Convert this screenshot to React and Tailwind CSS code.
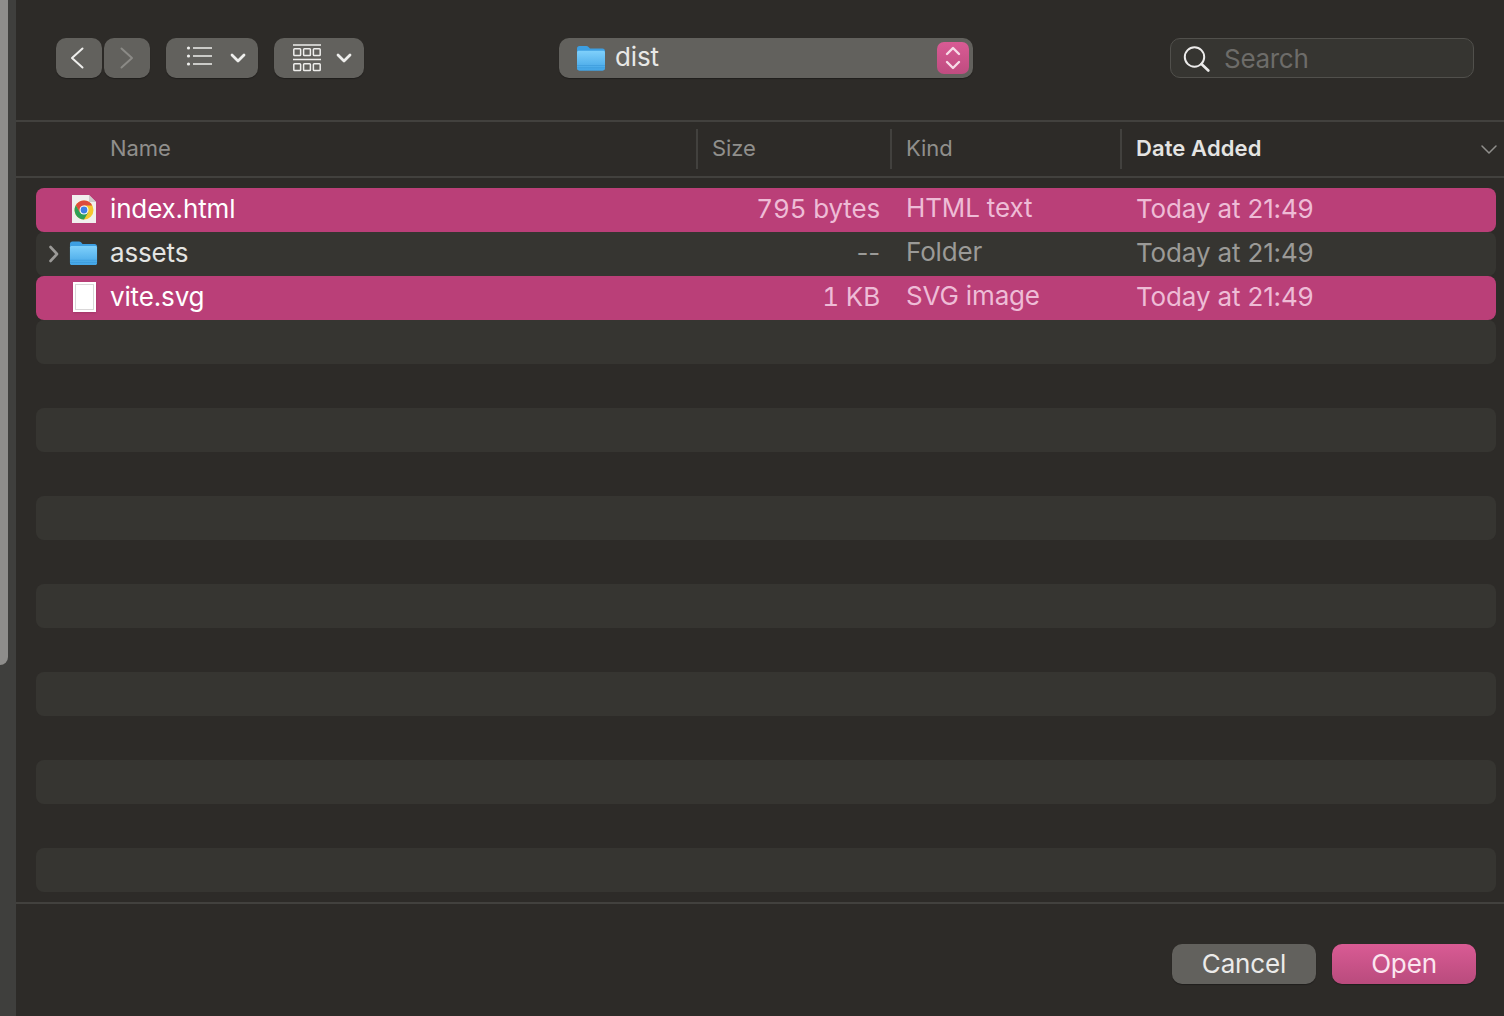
const FONT = 'font-["Inter","Liberation_Sans",sans-serif]';

const FILES = [
  { name: 'index.html', size: '795 bytes', kind: 'HTML text', date: 'Today at 21:49', icon: 'chrome', selected: true },
  { name: 'assets', size: '--', kind: 'Folder', date: 'Today at 21:49', icon: 'folder', expandable: true },
  { name: 'vite.svg', size: '1 KB', kind: 'SVG image', date: 'Today at 21:49', icon: 'blank', selected: true },
];

const EMPTY_ROWS = 13;

// thin open chevron, points given in its own box
function Chevron({ w, h, points, color, width = 2 }) {
  return (
    <svg viewBox={`0 0 ${w} ${h}`} width={w} height={h} fill="none" stroke={color} strokeWidth={width} strokeLinecap="round" strokeLinejoin="round" className="shrink-0">
      <polyline points={points} />
    </svg>
  );
}

function FolderIcon({ id, className }) {
  return (
    <svg viewBox="0 0 30 26" className={className}>
      <defs>
        <linearGradient id={id} x1="0" y1="0" x2="0" y2="1">
          <stop offset="0" stopColor="#7fd0fb" />
          <stop offset="1" stopColor="#43a5e6" />
        </linearGradient>
      </defs>
      <path d="M1 3.5C1 2 2 1 3.5 1h6.8c1 0 1.6.4 2.2 1l1.5 1.6H26.5C28 3.6 29 4.6 29 6v17c0 1.4-1 2.4-2.5 2.4h-23C2 25.4 1 24.4 1 23z" fill="#3d9fe2" />
      <path d="M1 7.4C1 6.4 1.8 5.8 2.8 5.8h24.4c1 0 1.8.6 1.8 1.6V23c0 1.4-1 2.4-2.5 2.4h-23C2 25.4 1 24.4 1 23z" fill={`url(#${id})`} />
      <path d="M1 20.5h28M1 22.8h28" stroke="#2f8ed2" strokeWidth="0.6" opacity="0.7" />
    </svg>
  );
}

function ChromeFileIcon() {
  return (
    <svg viewBox="0 0 26 28" className="w-[26px] h-[28px]">
      <path d="M1 0h17l7 7v21H1z" fill="#f1efee" />
      <path d="M18 0l7 7h-7z" fill="#cfcdcc" />
      <circle cx="13" cy="15" r="9.5" fill="#f6c62f" />
      <path d="M13 5.5a9.5 9.5 0 0 0-8.2 4.8l4.1 7.1L13 10.5h8.2A9.5 9.5 0 0 0 13 5.5z" fill="#dd4b3e" />
      <path d="M4.800 10.300A9.500 9.500 0 0 0 13 24.500l4.100-7.100h-8.200z" fill="#2f9e58" />
      <circle cx="13" cy="15" r="4.500" fill="#fff" />
      <circle cx="13" cy="15" r="3.400" fill="#3f7fe6" />
    </svg>
  );
}

function BlankFileIcon() {
  return (
    <div className="w-[23px] h-[30px] bg-white p-[2px] shadow-sm">
      <div className="w-full h-full border border-[#d9d7d8]" />
    </div>
  );
}

function ListIcon() {
  return (
    <svg viewBox="0 0 28 20" className="w-[28px] h-[20px] mb-[4px] shrink-0" stroke="#eeeeec" fill="none">
      <path d="M7 2h19M7 10h19M7 18h19" strokeWidth="1.700" />
      <circle cx="2.500" cy="2" r="1.600" fill="#eeeeec" stroke="none" />
      <circle cx="2.500" cy="10" r="1.600" fill="#eeeeec" stroke="none" />
      <circle cx="2.500" cy="18" r="1.600" fill="#eeeeec" stroke="none" />
    </svg>
  );
}

function GalleryIcon() {
  return (
    <svg viewBox="0 0 28 28" className="w-[28px] h-[28px] shrink-0" stroke="#eeeeec" fill="none" strokeWidth="1.500">
      <path d="M0 1h28M0 15.500h28" />
      <rect x="0.800" y="4.800" width="6.800" height="6.800" rx="0.800" />
      <rect x="10.600" y="4.800" width="6.800" height="6.800" rx="0.800" />
      <rect x="20.400" y="4.800" width="6.800" height="6.800" rx="0.800" />
      <rect x="0.800" y="19.800" width="6.800" height="6.800" rx="0.800" />
      <rect x="10.600" y="19.800" width="6.800" height="6.800" rx="0.800" />
      <rect x="20.400" y="19.800" width="6.800" height="6.800" rx="0.800" />
    </svg>
  );
}

function SearchIcon() {
  return (
    <svg viewBox="0 0 28 28" className="w-[28px] h-[28px] shrink-0" fill="none" stroke="#ecebea">
      <circle cx="11.500" cy="13" r="9.700" strokeWidth="2" />
      <path d="M18.500 20l6.800 6.500" strokeWidth="2.600" strokeLinecap="round" />
    </svg>
  );
}

function ToolButton({ className, children }) {
  return (
    <div className={`h-[40px] bg-[#62615d] rounded-[10px] flex items-center shadow-[0_1px_1px_rgba(0,0,0,0.3)] ${className}`}>
      {children}
    </div>
  );
}

function Toolbar() {
  return (
    <div className="h-[120px] flex items-start pt-[38px] pl-[40px]">
      <div className="flex gap-[2px]">
        <ToolButton className="w-[46px] justify-center pr-[4px]">
          <Chevron w={16} h={24} points="13.500,2.500 3,12 13.500,21.500" color="#eeeeec" />
        </ToolButton>
        <ToolButton className="w-[46px] justify-center">
          <Chevron w={16} h={24} points="2.500,2.500 13,12 2.500,21.500" color="#8b8a86" />
        </ToolButton>
      </div>
      <ToolButton className="w-[92px] ml-[16px] pl-[20px] gap-[16px]">
        <ListIcon />
        <Chevron w={16} h={10} points="2,2 8,8 14,2" color="#eeeeec" width={2.800} />
      </ToolButton>
      <ToolButton className="w-[90px] ml-[16px] pl-[19px] gap-[15px]">
        <GalleryIcon />
        <Chevron w={16} h={10} points="2,2 8,8 14,2" color="#eeeeec" width={2.800} />
      </ToolButton>

      <ToolButton className="w-[414px] ml-[195px] pl-[17px] pr-[4px]">
        <FolderIcon id="folder-path" className="w-[30px] h-[26px]" />
        <span className="ml-[9px] pb-[2px] text-[26px] leading-none tracking-[-0.15px] text-[#e8e8e6]">dist</span>
        <div className="ml-auto w-[32px] h-[32px] rounded-[7px] bg-gradient-to-b from-[#d95b94] to-[#bf4c80] flex flex-col items-center justify-center gap-[4px]">
          <Chevron w={16} h={10} points="2,8 8,2 14,8" color="#f7dbe7" width={2.400} />
          <Chevron w={16} h={10} points="2,2 8,8 14,2" color="#f7dbe7" width={2.400} />
        </div>
      </ToolButton>

      <div className="w-[304px] h-[40px] ml-[197px] flex items-center pl-[12px] rounded-[10px] border border-[#51504c] bg-[#363531]">
        <SearchIcon />
        <span className="ml-[13px] pt-[2px] text-[26px] leading-none tracking-[-0.3px] text-[#6d6c69]">Search</span>
      </div>
    </div>
  );
}

function ColumnHeader() {
  return (
    <div className="h-[58px] flex border-y-2 border-[#42413e] text-[22px] tracking-[-0.1px] text-[#908f8c] items-stretch">
      <div className="w-[682px] pl-[94px] pb-[2px] flex items-center border-r-2 border-[#42413e] my-[7px]">Name</div>
      <div className="w-[194px] pl-[14px] pb-[2px] flex items-center border-r-2 border-[#42413e] my-[7px]">Size</div>
      <div className="w-[230px] pl-[14px] pb-[2px] flex items-center border-r-2 border-[#42413e] my-[7px]">Kind</div>
      <div className="flex-1 pl-[14px] pr-[6px] flex items-center my-[7px]">
        <span className="pb-[2px] font-semibold tracking-[0.1px] text-[#e4e4e2]">Date Added</span>
        <span className="ml-auto">
          <Chevron w={18} h={11} points="2,2 9,9 16,2" color="#908f8c" width={1.500} />
        </span>
      </div>
    </div>
  );
}

function FileRow({ file }) {
  const rowColor = file.selected ? 'bg-[#ba3f78]' : 'bg-[#363531]';
  const nameColor = file.selected ? 'text-white' : 'text-[#e4e4e2]';
  const infoColor = file.selected ? 'text-[#eebcd6]' : 'text-[#9b9a97]';
  // tabular digits only where there are digits, the dashes stay tight
  const sizeNums = file.size === '--' ? '' : 'tabular-nums';

  return (
    <div className={`h-[44px] flex items-center rounded-[8px] pb-[2px] text-[26px] leading-none tracking-[-0.15px] ${rowColor}`}>
      <div className="w-[34px] flex justify-end pr-[10px] pt-[2px]">
        {file.expandable && <Chevron w={12} h={20} points="2.500,3 9,10 2.500,17" color="#9b9a97" width={2.600} />}
      </div>
      <div className="w-[40px] flex justify-center pr-[12px]">
        {file.icon === 'chrome' && <ChromeFileIcon />}
        {file.icon === 'folder' && <FolderIcon id="folder-row" className="w-[30px] h-[26px] -ml-[1px]" />}
        {file.icon === 'blank' && <BlankFileIcon />}
      </div>
      <div className={`w-[590px] ${nameColor}`}>{file.name}</div>
      <div className={`w-[182px] text-right pr-[2px] ${sizeNums} ${infoColor}`}>{file.size}</div>
      <div className={`w-[254px] pl-[24px] pb-[2px] ${infoColor}`}>{file.kind}</div>
      <div className={infoColor}>{file.date}</div>
    </div>
  );
}

function FileList() {
  return (
    <div className="h-[726px] border-b-2 border-[#42413e] pt-[10px] pl-[20px] pr-[8px]">
      {FILES.map(file => <FileRow key={file.name} file={file} />)}
      {Array.from({ length: EMPTY_ROWS }, (_, i) => (
        <div key={i} className={`h-[44px] rounded-[8px] ${i % 2 === 0 ? 'bg-[#363531]' : ''}`} />
      ))}
    </div>
  );
}

function Footer() {
  return (
    <div className="flex justify-end gap-[16px] pt-[40px] pr-[28px] text-[26px] leading-none tracking-[-0.15px]">
      <button className="w-[144px] h-[40px] rounded-[10px] bg-[#62615d] text-[#ecebea] shadow-[0_1px_1px_rgba(0,0,0,0.3)]">Cancel</button>
      <button className="w-[144px] h-[40px] rounded-[10px] bg-gradient-to-b from-[#d95b94] to-[#b94b7d] text-[#fbe6f0] shadow-[0_1px_1px_rgba(0,0,0,0.3)]">Open</button>
    </div>
  );
}

export default function App() {
  return (
    <div className={`w-[1504px] h-[1016px] flex overflow-hidden bg-[#2d2b28] ${FONT}`}>
      {/* window behind the sheet */}
      <div className="w-[16px] bg-[#3f3f3d] shrink-0">
        <div className="w-[8px] h-[665px] bg-[#8e8d8b] rounded-br-[8px]" />
      </div>
      <div className="flex-1 min-w-0">
        <Toolbar />
        <ColumnHeader />
        <FileList />
        <Footer />
      </div>
    </div>
  );
}
